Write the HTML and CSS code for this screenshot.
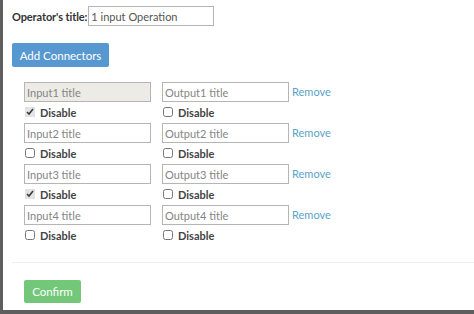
FILE: index.html
```html
<!DOCTYPE html>
<html>
<head>
<meta charset="utf-8">
<link rel="stylesheet" href="styles.css">
</head>
<body>
<div class="frame">
  <div class="title-row">
    <label class="title-label" for="op">Operator's title:</label>
    <input id="op" class="field title-field" type="text" value="1 input Operation">
  </div>
  <button class="btn btn-blue" type="button">Add Connectors</button>
  <div class="connectors">
    <div class="conn">
      <div class="col">
        <input class="field field-disabled" type="text" placeholder="Input1 title" readonly>
        <label class="chk"><input type="checkbox" checked><span>Disable</span></label>
      </div>
      <div class="col">
        <input class="field" type="text" placeholder="Output1 title">
        <label class="chk"><input type="checkbox"><span>Disable</span></label>
      </div>
      <a class="remove" href="#">Remove</a>
    </div>
    <div class="conn">
      <div class="col">
        <input class="field" type="text" placeholder="Input2 title">
        <label class="chk"><input type="checkbox"><span>Disable</span></label>
      </div>
      <div class="col">
        <input class="field" type="text" placeholder="Output2 title">
        <label class="chk"><input type="checkbox"><span>Disable</span></label>
      </div>
      <a class="remove" href="#">Remove</a>
    </div>
    <div class="conn">
      <div class="col">
        <input class="field" type="text" placeholder="Input3 title">
        <label class="chk"><input type="checkbox" checked><span>Disable</span></label>
      </div>
      <div class="col">
        <input class="field" type="text" placeholder="Output3 title">
        <label class="chk"><input type="checkbox"><span>Disable</span></label>
      </div>
      <a class="remove" href="#">Remove</a>
    </div>
    <div class="conn">
      <div class="col">
        <input class="field" type="text" placeholder="Input4 title">
        <label class="chk"><input type="checkbox"><span>Disable</span></label>
      </div>
      <div class="col">
        <input class="field" type="text" placeholder="Output4 title">
        <label class="chk"><input type="checkbox"><span>Disable</span></label>
      </div>
      <a class="remove" href="#">Remove</a>
    </div>
  </div>
  <div class="footer">
    <button class="btn btn-green" type="button">Confirm</button>
  </div>
</div>
</body>
</html>
```

FILE: styles.css
```css
html, body {
  margin: 0;
  padding: 0;
  background: #ffffff;
}
.frame {
  box-sizing: border-box;
  width: 474px;
  height: 314px;
  border-left: 3px solid #5e5e5e;
  border-bottom: 4px solid #5e5e5e;
  font-family: Lato, "Open Sans", sans-serif;
  font-size: 11px;
  color: #333;
  overflow: hidden;
}
.title-row {
  display: flex;
  align-items: center;
  padding: 6px 0 0 9px;
  gap: 1px;
}
.title-label {
  font-weight: bold;
  color: #333;
  letter-spacing: -0.1px;
}
.field {
  box-sizing: border-box;
  height: 20px;
  width: 127px;
  border: 1px solid #b5b5b5;
  padding: 0 2px;
  font-family: inherit;
  font-size: 11px;
  color: #555;
  background: #fff;
  outline: none;
  margin: 0;
}
.field::placeholder {
  color: #858585;
}
.field-disabled {
  background: #ecebe5;
}
.title-field {
  width: 126px;
}
.btn {
  display: flex;
  align-items: center;
  justify-content: center;
  padding: 0;
  white-space: nowrap;
  border: none;
  border-radius: 2px;
  color: #fff;
  font-family: inherit;
  font-size: 11.5px;
  cursor: pointer;
}
.btn-blue {
  margin: 17px 0 0 9px;
  width: 97px;
  height: 24px;
  background: #5898d1;
}
.connectors {
  padding: 15px 0 0 21px;
  display: flex;
  flex-direction: column;
}
.conn {
  display: flex;
  align-items: flex-start;
  height: 41px;
}
.col {
  display: flex;
  flex-direction: column;
  width: 127px;
  margin-right: 11px;
}
.col + .col {
  margin-right: 3px;
}
.chk {
  display: flex;
  align-items: center;
  height: 20px;
  font-weight: bold;
  color: #444;
}
.chk input {
  margin: 0 5px 0 1px;
  width: 10px;
  height: 10px;
  accent-color: #e4e4e4;
}
.remove {
  color: #5aa3c9;
  text-decoration: none;
  line-height: 20px;
}
.footer {
  margin: 16px 0 0 9px;
  border-top: 1px solid #efefef;
  padding: 17px 0 0 12px;
}
.btn-green {
  width: 57px;
  height: 23px;
  background: #72c779;
}
```
